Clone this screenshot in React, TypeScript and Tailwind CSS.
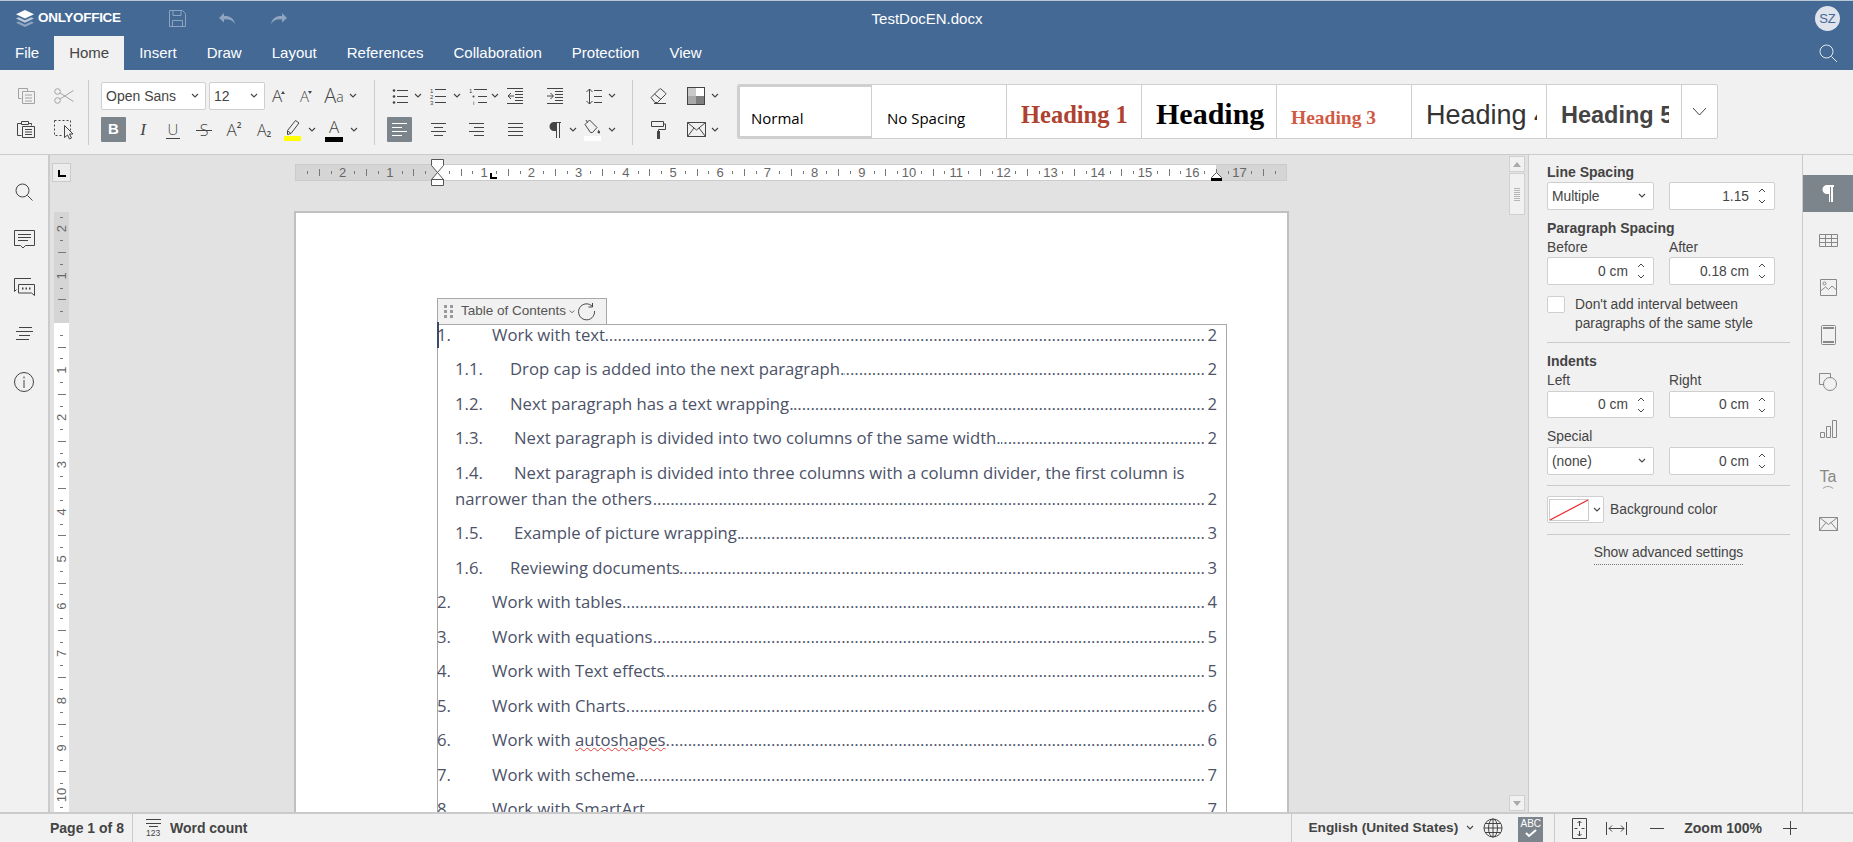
import type { ReactNode } from "react";

const CM = 47.2;

function Ic({ w = 20, h = 20, c = "#444", o = 1, children }: { w?: number; h?: number; c?: string; o?: number; children: ReactNode }) {
  return (
    <svg width={w} height={h} viewBox={`0 0 ${w} ${h}`} fill="none" stroke={c} strokeWidth={1} opacity={o} className="shrink-0">
      {children}
    </svg>
  );
}

function Caret({ c = "#444" }: { c?: string }) {
  return (
    <svg width="8" height="6" viewBox="0 0 8 6" fill="none" stroke={c} strokeWidth={1.1} className="shrink-0">
      <path d="M1 1l3 3 3-3" />
    </svg>
  );
}

function Slot({ className, children }: { className: string; children?: ReactNode }) {
  return <div className={`flex shrink-0 items-center justify-center ${className}`}>{children}</div>;
}

function Combo({ label, className }: { label: string; className: string }) {
  return (
    <div className={`flex h-[28px] items-center justify-between rounded-[2px] border border-[#cfcfcf] bg-white pl-[4px] pr-[6px] text-[14px] text-[#444] ${className}`}>
      <span>{label}</span>
      <Caret />
    </div>
  );
}

function Spin({ value, className }: { value: string; className: string }) {
  return (
    <div className={`flex items-center justify-end rounded-[2px] border border-[#cfcfcf] bg-white pr-[8px] text-[#444] ${className}`}>
      <span className="mr-[9px] pt-px">{value}</span>
      <div className="flex flex-col gap-[6px]">
        <svg width="8" height="5" viewBox="0 0 8 5" fill="none" stroke="#444"><path d="M1 4l3-3 3 3" /></svg>
        <svg width="8" height="5" viewBox="0 0 8 5" fill="none" stroke="#444"><path d="M1 1l3 3 3-3" /></svg>
      </div>
    </div>
  );
}

function HRuler() {
  const origin = 142;
  const ticks: ReactNode[] = [];
  for (let k = -11; k <= 71; k++) {
    const x = origin + (k * CM) / 4;
    if (x < 5 || x > 988 || k === 0) continue;
    if (k % 4 === 0) {
      ticks.push(
        <text key={k} x={x} y={13} textAnchor="middle" fontSize="13" fill="#666" stroke="none" fontFamily="Liberation Sans">
          {Math.abs(k / 4)}
        </text>
      );
    } else {
      const tall = k % 2 === 0;
      ticks.push(<path key={k} d={`M${Math.round(x) + 0.5} ${tall ? 5 : 7}v${tall ? 7 : 3}`} stroke="#777" />);
    }
  }
  return (
    <svg width="992" height="17" viewBox="0 0 992 17" className="block">
      <rect x="0.5" y="0.5" width="991" height="16" fill="#d5d5d5" stroke="#cbcbcb" />
      <rect x="142" y="1" width="779" height="15" fill="#fff" />
      {ticks}
    </svg>
  );
}

function VRuler() {
  const origin = 111;
  const h = 600;
  const ticks: ReactNode[] = [];
  for (let k = -9; k <= 42; k++) {
    const y = origin + (k * CM) / 4;
    if (y < 4 || y > h || k === 0) continue;
    if (k % 4 === 0) {
      ticks.push(
        <text key={k} x={0} y={0} transform={`translate(12 ${y}) rotate(-90)`} textAnchor="middle" fontSize="13" fill="#666" stroke="none" fontFamily="Liberation Sans">
          {Math.abs(k / 4)}
        </text>
      );
    } else {
      const tall = k % 2 === 0;
      ticks.push(<path key={k} d={`M${tall ? 4 : 6} ${Math.round(y) + 0.5}h${tall ? 8 : 3}`} stroke="#777" />);
    }
  }
  return (
    <svg width="15" height={h} viewBox={`0 0 15 ${h}`} className="block">
      <rect x="0" y="0" width="15" height={h} fill="#fff" />
      <rect x="0" y="0" width="15" height={origin} fill="#d5d5d5" />
      {ticks}
    </svg>
  );
}

type TocRow = { num: string; title: ReactNode; page: number; pad?: string; wrap?: ReactNode };

const toc: TocRow[] = [
  { num: "1.", title: "Work with text", page: 2 },
  { num: "1.1.", title: "Drop cap is added into the next paragraph.", page: 2 },
  { num: "1.2.", title: "Next paragraph has a text wrapping.", page: 2 },
  { num: "1.3.", title: "Next paragraph is divided into two columns of the same width.", page: 2, pad: "pl-[4px]" },
  {
    num: "1.4.",
    title: "Next paragraph is divided into three columns with a column divider, the first column is",
    page: 2,
    pad: "pl-[4px]",
    wrap: "narrower than the others",
  },
  { num: "1.5.", title: "Example of picture wrapping.", page: 3, pad: "pl-[4px]" },
  { num: "1.6.", title: "Reviewing documents", page: 3 },
  { num: "2.", title: "Work with tables", page: 4 },
  { num: "3.", title: "Work with equations", page: 5 },
  { num: "4.", title: "Work with Text effects", page: 5 },
  { num: "5.", title: "Work with Charts.", page: 6 },
  {
    num: "6.",
    title: (
      <>
        Work with <span className="underline decoration-[#e23b3b] decoration-wavy decoration-1">autoshapes</span>.
      </>
    ),
    page: 6,
  },
  { num: "7.", title: "Work with scheme", page: 7 },
  { num: "8.", title: "Work with SmartArt", page: 7 },
];

const dots = ".".repeat(260);

function Leader({ page }: { page: number }) {
  return (
    <>
      <span dir="rtl" className="min-w-0 flex-1 overflow-hidden whitespace-nowrap">
        {dots}
      </span>
      <span className="w-[12px] shrink-0 text-right">{page}</span>
    </>
  );
}

function TocLine({ row }: { row: TocRow }) {
  const sub = row.num.length > 2;
  return (
    <div className={`flex flex-col whitespace-nowrap ${sub ? "pl-[17px]" : "-ml-px"}`}>
      <div className="flex h-[34.5px] items-center">
        <span className="w-[55px] shrink-0">{row.num}</span>
        <span className={`shrink-0 ${row.pad ?? ""}`}>{row.title}</span>
        {!row.wrap && <Leader page={row.page} />}
      </div>
      {row.wrap && (
        <div className="-mt-[8.5px] flex h-[34.5px] items-center">
          <span className="shrink-0">{row.wrap}</span>
          <Leader page={row.page} />
        </div>
      )}
    </div>
  );
}

function StyleCell({ className, children }: { className: string; children: ReactNode }) {
  return <div className={`flex h-full shrink-0 items-center overflow-hidden whitespace-nowrap border-r border-[#cfcfcf] bg-white ${className}`}>{children}</div>;
}

export default function App() {
  return (
    <div className="flex h-[842px] w-[1853px] flex-col overflow-hidden bg-[#f1f1f1] text-[#444] [font-family:'Liberation_Sans',Arial,sans-serif]">
      {/* title bar */}
      <header className="relative flex h-[36px] shrink-0 items-center border-t border-[#b9c6d6] bg-[#446995] text-white">
        <svg width="20" height="20" viewBox="0 0 20 20" className="ml-[15px] shrink-0">
          <path d="M10 1l9 4.200-9 4.300-9-4.300z" fill="#fff" />
          <path d="M3.600 8.300l6.400 3 6.400-3 2.600 1.200-9 4.200-9-4.200z" fill="#fff" opacity=".65" />
          <path d="M3.600 12.500l6.400 3 6.400-3 2.600 1.200-9 4.300-9-4.300z" fill="#fff" opacity=".4" />
        </svg>
        <span className="ml-[3px] text-[13.500px] font-bold tracking-[-0.3px]">ONLYOFFICE</span>
        <svg width="17" height="17" viewBox="0 0 17 17" fill="none" stroke="#fff" opacity=".4" className="ml-[48px]">
          <path d="M.5.5h13l3 3v13H.5zM4 .5v5h8v-5M3.500 16.500v-6h10v6" />
        </svg>
        <svg width="18" height="12" viewBox="0 0 18 12" fill="#fff" opacity=".4" className="ml-[33px]">
          <path d="M5 0L0 5l5 4.500V6.500c4-.8 8 .4 11 4.500C15 5 10 2.500 5 3z" />
        </svg>
        <svg width="18" height="12" viewBox="0 0 18 12" fill="#fff" opacity=".4" className="ml-[32px] -scale-x-100">
          <path d="M5 0L0 5l5 4.500V6.500c4-.8 8 .4 11 4.500C15 5 10 2.500 5 3z" />
        </svg>
        <span className="absolute left-[827px] top-[9px] w-[200px] text-center text-[15px] leading-[18px]">TestDocEN.docx</span>
        <span className="ml-auto mr-[13px] flex h-[25px] w-[25px] items-center justify-center rounded-full bg-[#dfe3ec] text-[13px] text-[#446995]">SZ</span>
      </header>

      {/* tabs */}
      <nav className="flex h-[34px] shrink-0 items-stretch bg-[#446995] text-[15px] text-white">
        <span className="flex items-center pl-[15px] pr-[15px]">File</span>
        <span className="flex w-[70px] items-center justify-center bg-[#f1f1f1] text-[#444]">Home</span>
        <span className="ml-[15px] flex items-center">Insert</span>
        <span className="ml-[30px] flex items-center">Draw</span>
        <span className="ml-[30px] flex items-center">Layout</span>
        <span className="ml-[30px] flex items-center">References</span>
        <span className="ml-[30px] flex items-center">Collaboration</span>
        <span className="ml-[30px] flex items-center">Protection</span>
        <span className="ml-[30px] flex items-center">View</span>
        <svg width="19" height="19" viewBox="0 0 19 19" fill="none" stroke="#fff" opacity=".85" className="ml-auto mr-[15px] self-center">
          <circle cx="7.500" cy="7.500" r="6.500" />
          <path d="M12.500 12.500l5.500 5.500" />
        </svg>
      </nav>

      {/* toolbar */}
      <section className="flex h-[85px] shrink-0 border-b border-[#cbcbcb] text-[#444]">
        <div className="flex w-[88px] shrink-0 flex-col pl-[7px] pt-[12px]">
          <div className="flex h-[28px]">
            <Slot className="w-[38px]">
              <Ic w={17} h={16} o={0.45}>
                <path d="M.5 .5h9v3M.5 .5v10h3M4.500 3.500h12v12h-12zM7 7h7M7 10h7M7 13h7" />
              </Ic>
            </Slot>
            <Slot className="w-[38px]">
              <Ic w={20} h={16} o={0.45}>
                <circle cx="3.500" cy="3.500" r="2.800" />
                <circle cx="3.500" cy="12.500" r="2.800" />
                <path d="M6 5L19.500 13.500M6 11L19.500 2.500" />
              </Ic>
            </Slot>
          </div>
          <div className="mt-[7px] flex h-[25px]">
            <Slot className="w-[38px]">
              <Ic w={18} h={17}>
                <path d="M4.500 2.500H.5v12h4M11.500 2.500h3v2M4.500 .5h7v3h-7z" strokeWidth="1" />
                <path d="M5.500 5.500h12v11h-12zM8 8.500h7M8 11h7M8 13.500h7" />
              </Ic>
            </Slot>
            <Slot className="w-[38px]">
              <Ic w={20} h={20}>
                <path d="M.5 .5h16v12M.5 .5v15h9" strokeDasharray="2 2" />
                <path d="M10.500 5.500v12l3-2.500 2 4 2-1-2-4h3.500z" fill="#f1f1f1" stroke="#444" />
              </Ic>
            </Slot>
          </div>
        </div>
        <div className="mt-[10px] h-[65px] w-px shrink-0 bg-[#cbcbcb]" />

        <div className="flex w-[285px] shrink-0 flex-col pl-[12px] pt-[12px]">
          <div className="flex h-[28px] items-center">
            <Combo label="Open Sans" className="w-[105px]" />
            <Combo label="12" className="ml-[3px] w-[56px]" />
            <Slot className="w-[27px] font-['Open_Sans'] font-light">
              <span className="text-[17px]">A</span>
              <span className="-ml-px mb-[8px] h-0 w-0 border-x-[2.500px] border-b-[3px] border-x-transparent border-b-[#444]" />
            </Slot>
            <Slot className="w-[28px] font-['Open_Sans'] font-light">
              <span className="text-[15px]">A</span>
              <span className="-ml-px mb-[8px] h-0 w-0 border-x-[2.500px] border-t-[3px] border-x-transparent border-t-[#444]" />
            </Slot>
            <Slot className="w-[28px] items-baseline font-['Open_Sans'] font-light">
              <span className="text-[20px]">A</span>
              <span className="text-[14px]">a</span>
            </Slot>
            <Slot className="w-[10px]"><Caret /></Slot>
          </div>
          <div className="mt-[7px] flex h-[25px] items-center">
            <Slot className="h-[25px] w-[25px] rounded-[1px] bg-[#7d858c] text-[15px] font-bold text-white">B</Slot>
            <Slot className="w-[34px] font-['Liberation_Serif'] text-[17px] italic">I</Slot>
            <Slot className="w-[26px]">
              <span className="border-b border-[#444] px-[2px] font-['Open_Sans'] text-[15px] font-light leading-[18px]">U</span>
            </Slot>
            <Slot className="relative w-[36px] font-['Open_Sans'] text-[16px] font-light">
              S<span className="absolute left-[10px] top-[12px] h-px w-[16px] bg-[#444]" />
            </Slot>
            <Slot className="w-[24px] font-['Open_Sans'] font-light">
              <span className="text-[17px]">A</span>
              <span className="mb-[9px] text-[8px] font-semibold leading-none">2</span>
            </Slot>
            <Slot className="w-[36px] font-['Open_Sans'] font-light">
              <span className="text-[16px]">A</span>
              <span className="mt-[9px] text-[8px] font-semibold leading-none">2</span>
            </Slot>
            <Slot className="w-[22px]">
              <svg width="18" height="23" viewBox="0 0 18 23" fill="none" stroke="#444">
                <path d="M3.500 12.500l8-10 3.500 2.500-8 10.500-3.500 1zM4 13l3 2.500" />
                <rect x="0" y="18" width="17" height="5" fill="#ffff00" stroke="none" />
              </svg>
            </Slot>
            <Slot className="w-[16px]"><Caret /></Slot>
            <Slot className="relative h-[25px] w-[28px] items-start font-['Open_Sans'] text-[17px] font-light leading-[20px]">
              A<span className="absolute bottom-0 left-[5px] h-[5px] w-[18px] bg-black" />
            </Slot>
            <Slot className="w-[12px]"><Caret /></Slot>
          </div>
        </div>
        <div className="mt-[10px] h-[65px] w-px shrink-0 bg-[#cbcbcb]" />

        <div className="flex w-[257px] shrink-0 flex-col pt-[12px]">
          <div className="flex h-[28px] items-center pl-[11px]">
            <Slot className="w-[28px]">
              <Ic w={16} h={16}>
                <path d="M5 2.500h11M5 8.500h11M5 14.500h11" />
                <circle cx="2" cy="2.500" r="1.300" fill="#444" stroke="none" />
                <circle cx="2" cy="8.500" r="1.300" fill="#444" stroke="none" />
                <circle cx="2" cy="14.500" r="1.300" fill="#444" stroke="none" />
              </Ic>
            </Slot>
            <Slot className="w-[8px]"><Caret /></Slot>
            <Slot className="w-[32px]">
              <Ic w={16} h={18}>
                <path d="M5 2.500h11M5 9.500h11M5 15.500h11" />
                <text x="0" y="6" fontSize="6" fill="#444" stroke="none">1</text>
                <text x="0" y="12" fontSize="6" fill="#444" stroke="none">2</text>
                <text x="0" y="18" fontSize="6" fill="#444" stroke="none">3</text>
              </Ic>
            </Slot>
            <Slot className="w-[6px]"><Caret /></Slot>
            <Slot className="w-[36px]">
              <Ic w={18} h={18}>
                <path d="M5 2.500h13M9 9.500h9M9 15.500h9" />
                <text x="0" y="6" fontSize="6" fill="#444" stroke="none">1</text>
                <circle cx="4.500" cy="9.500" r="1" fill="#444" stroke="none" />
                <text x="4" y="18" fontSize="6" fill="#444" stroke="none">i</text>
              </Ic>
            </Slot>
            <Slot className="-ml-[4px] w-[6px]"><Caret /></Slot>
            <Slot className="w-[34px]">
              <Ic w={16} h={16}>
                <path d="M0 .5h16M8 3.500h8M8 6.500h8M8 9.500h8M8 12.500h8M0 15.500h16M1 8h6M4 5l-3 3 3 3" />
              </Ic>
            </Slot>
            <Slot className="w-[46px]">
              <Ic w={16} h={16}>
                <path d="M0 .5h16M8 3.500h8M8 6.500h8M8 9.500h8M8 12.500h8M0 15.500h16M0 8h6M3.500 5l3 3-3 3" />
              </Ic>
            </Slot>
            <Slot className="w-[32px]">
              <Ic w={16} h={17}>
                <path d="M8 2.500h8M8 8.500h8M8 14.500h8M3.500 1v15M.5 4l3-3 3 3M.5 13l3 3 3-3" />
              </Ic>
            </Slot>
            <Slot className="w-[4px]"><Caret /></Slot>
          </div>
          <div className="mt-[7px] flex h-[25px] items-center pl-[12px]">
            <Slot className="h-[25px] w-[25px] rounded-[1px] bg-[#7d858c]">
              <Ic w={15} h={15} c="#fff">
                <path d="M0 1.500h15M0 5.500h10M0 9.500h15M0 13.500h10" />
              </Ic>
            </Slot>
            <Slot className="w-[52px]">
              <Ic w={15} h={15}>
                <path d="M0 1.500h15M3 5.500h9M0 9.500h15M3 13.500h9" />
              </Ic>
            </Slot>
            <Slot className="w-[24px]">
              <Ic w={15} h={15}>
                <path d="M0 1.500h15M5 5.500h10M0 9.500h15M5 13.500h10" />
              </Ic>
            </Slot>
            <Slot className="w-[54px]">
              <Ic w={15} h={15}>
                <path d="M0 1.500h15M0 5.500h15M0 9.500h15M0 13.500h15" />
              </Ic>
            </Slot>
            <Slot className="w-[26px]">
              <svg width="12" height="16" viewBox="0 0 12 16" fill="#444">
                <path d="M5 0h7v1h-1v15H10V1H8v15H7V9H5A4.500 4.500 0 015 0z" />
              </svg>
            </Slot>
            <Slot className="w-[10px]"><Caret /></Slot>
            <Slot className="w-[28px]">
              <svg width="17" height="22" viewBox="0 0 17 22" fill="none" stroke="#444">
                <path d="M1 5.500L5.500 1l7.500 7.500-4.500 5h-2zM3.500 3.500L2 1" />
                <path d="M14.500 10.500c1 1.500 2 2.500 1.500 3.500s-3 0-2.500-1 1-1.500 1-2.500z" fill="#444" stroke="none" />
                <rect x="0" y="17" width="17" height="5" fill="#fff" stroke="none" />
              </svg>
            </Slot>
            <Slot className="w-[12px]"><Caret /></Slot>
          </div>
        </div>
        <div className="mt-[10px] h-[65px] w-px shrink-0 bg-[#cbcbcb]" />

        <div className="flex w-[104px] shrink-0 flex-col pt-[12px]">
          <div className="flex h-[28px] items-center">
            <Slot className="w-[50px]">
              <Ic w={17} h={16}>
                <path d="M1 9.500L9.500 1c.5-.5 1-.5 1.500 0l4.500 4c.5.500.5 1 0 1.500L7.500 14.500H5zM4.500 6L11 11.500M4 15.500h12" />
              </Ic>
            </Slot>
            <Slot className="w-[26px]">
              <svg width="18" height="18" viewBox="0 0 18 18" stroke="#444">
                <rect x="1" y="1" width="8" height="8" fill="#c9c9c9" stroke="none" />
                <rect x="9" y="1" width="8" height="8" fill="#fff" stroke="none" />
                <rect x="1" y="9" width="8" height="8" fill="#a9a9a9" stroke="none" />
                <rect x="9" y="9" width="8" height="8" fill="#7f7f7f" stroke="none" />
                <rect x=".5" y=".5" width="17" height="17" fill="none" />
              </svg>
            </Slot>
            <Slot className="w-[12px]"><Caret /></Slot>
          </div>
          <div className="mt-[7px] flex h-[25px] items-center">
            <Slot className="w-[50px]">
              <svg width="15" height="18" viewBox="0 0 15 18" fill="none" stroke="#444">
                <path d="M.5 .5h12v5H.5zM12.500 3h2v5.500h-7v2" />
                <rect x="6" y="10" width="3" height="8" fill="#444" stroke="none" />
              </svg>
            </Slot>
            <Slot className="w-[26px]">
              <Ic w={19} h={15}>
                <path d="M.5 .5h18v14H.5zM.5 .5L9.500 8l9-7.500M.5 14.500l6.500-8.500M18.500 14.500L12 6" />
              </Ic>
            </Slot>
            <Slot className="w-[12px]"><Caret /></Slot>
          </div>
        </div>

        <div className="mt-[14px] flex h-[55px] w-[981px] shrink-0 overflow-hidden rounded-[2px] border border-[#cfcfcf] bg-white">
          <StyleCell className="w-[134px] border-2 border-[#848484] pl-[11px] font-['Open_Sans'] text-[15px] text-black">
            <span className="mt-[14px]">Normal</span>
          </StyleCell>
          <StyleCell className="w-[135px] pl-[15px] font-['Open_Sans'] text-[15px] text-black">
            <span className="mt-[14px]">No Spacing</span>
          </StyleCell>
          <StyleCell className="w-[135px] pl-[14px] font-['Liberation_Serif'] text-[24.500px] font-bold text-[#ae412f]">
            <span className="mt-[7px]">Heading 1</span>
          </StyleCell>
          <StyleCell className="w-[135px] pl-[14px] font-['Liberation_Serif'] text-[30px] font-bold text-black">
            <span className="mt-[4px]">Heading</span>
          </StyleCell>
          <StyleCell className="w-[135px] pl-[14px] font-['Liberation_Serif'] text-[19.500px] font-bold text-[#d15a45]">
            <span className="mt-[12px]">Heading 3</span>
          </StyleCell>
          <StyleCell className="w-[135px] pl-[14px] text-[27px] text-[#333]">
            <span className="mt-[7px] block w-[111px] overflow-hidden">Heading 4</span>
          </StyleCell>
          <StyleCell className="w-[135px] pl-[14px] text-[23.500px] font-bold text-[#444]">
            <span className="mt-[9px] block w-[108px] overflow-hidden">Heading 5</span>
          </StyleCell>
          <Slot className="h-full w-[35px]">
            <svg width="15" height="9" viewBox="0 0 15 9" fill="none" stroke="#444"><path d="M1 1l6.500 7L14 1" /></svg>
          </Slot>
        </div>
      </section>

      {/* work area */}
      <main className="flex min-h-0 flex-1">
        <aside className="flex w-[50px] shrink-0 flex-col items-center border-r-2 border-[#cbcbcb] pt-[28px]">
          <svg width="18" height="19" viewBox="0 0 18 19" fill="none" stroke="#444">
            <circle cx="7.500" cy="7.500" r="6.500" />
            <path d="M12.500 12.500l5 5" />
          </svg>
          <svg width="21" height="19" viewBox="0 0 21 19" fill="none" stroke="#444" className="mt-[28px]">
            <path d="M.5 .5h20v15h-9l-2.500 2.500-2.500-2.500h-6zM4 4.500h13M4 7.500h13M4 10.500h10" />
          </svg>
          <svg width="21" height="18" viewBox="0 0 21 18" fill="none" stroke="#444" className="mt-[29px]">
            <path d="M17 .5H.5v13l2-2M4.500 6.500h16v11l-3-2.500h-13z" />
            <path d="M8 10.500h1.500M11.500 10.500H13M15 10.500h1.500" strokeWidth="2" />
          </svg>
          <svg width="17" height="14" viewBox="0 0 17 14" fill="none" stroke="#444" className="mt-[31px]">
            <path d="M3 .5h13M0 4.500h17M3 8.500h11M0 12.500h13" />
          </svg>
          <svg width="20" height="20" viewBox="0 0 20 20" fill="none" stroke="#444" className="mt-[31px]">
            <circle cx="10" cy="10" r="9.500" />
            <path d="M10 8v8M10 4.500v2" />
          </svg>
        </aside>

        <div className="flex w-[1478px] shrink-0">
          <div className="min-w-0 flex-1 overflow-hidden bg-[#e2e2e2]">
            <div className="relative flex h-[56px] items-start pt-[8px]">
              <div className="ml-[2px] flex h-[19px] w-[19px] shrink-0 items-center justify-center border border-[#cbcbcb] bg-[#ececec]">
                <span className="mt-[2px] h-[7px] w-[8px] border-b-2 border-l-2 border-black" />
              </div>
              <div className="ml-[224px] mt-px shrink-0">
                <HRuler />
              </div>
              {/* indent markers */}
              <svg width="13" height="27" viewBox="0 0 13 27" fill="#fff" stroke="#555" className="absolute left-[381px] top-[4px]">
                <path d="M.5 .5h12v6l-6 7-6-7zM.5 20.500l6-7 6 7zM.5 20.500h12v6H.5z" />
              </svg>
              <span className="absolute left-[440px] top-[18px] h-[6px] w-[7px] border-b-2 border-l-2 border-black" />
              <svg width="13" height="9" viewBox="0 0 13 9" className="absolute left-[1160px] top-[17px]">
                <path d="M6.500 .5l5 5v2h-10v-2z" fill="#fff" stroke="#555" />
                <rect x="1" y="6" width="11" height="3" fill="#000" />
              </svg>
            </div>
            <div className="flex">
              <div className="ml-[4px] mt-px w-[15px] shrink-0">
                <VRuler />
              </div>
              <div className="ml-[225px] h-[601px] w-[995px] shrink-0 overflow-hidden border-2 border-b-0 border-[#c0c0c0] bg-white pl-[141px] pr-[60px] pt-[85px]">
                <div className="flex h-[26px] w-[170px] items-center border border-b-0 border-[#a8a8a8] bg-[#f1f1f1] pl-[6px] text-[13.500px] text-[#555]">
                  <svg width="9" height="13" viewBox="0 0 9 13" fill="#999">
                    <rect x="0" y="0" width="3" height="3" />
                    <rect x="6" y="0" width="3" height="3" />
                    <rect x="0" y="5" width="3" height="3" />
                    <rect x="6" y="5" width="3" height="3" />
                    <rect x="0" y="10" width="3" height="3" />
                    <rect x="6" y="10" width="3" height="3" />
                  </svg>
                  <span className="ml-[8px]">Table of Contents</span>
                  <span className="ml-[2px] scale-75"><Caret /></span>
                  <svg width="18" height="18" viewBox="0 0 18 18" fill="none" stroke="#444" className="ml-[2px]">
                    <path d="M14.500 3.500A8 8 0 1016.500 8M14.500 0v4h-4" />
                  </svg>
                </div>
                <div className="relative h-[500px] border border-b-0 border-[#a8a8a8] pr-[9px] font-['Open_Sans'] text-[16.700px] text-[#4c5268]">
                  <span className="absolute -left-[1px] -top-[3px] h-[26px] w-[2px] bg-[#3a4a6b]" />
                  <div className="-mt-[8px]">
                    {toc.map((row) => (
                      <TocLine key={row.num} row={row} />
                    ))}
                  </div>
                </div>
              </div>
            </div>
          </div>
          <div className="flex w-[19px] shrink-0 flex-col bg-[#e2e2e2] pr-[3px] pt-[1px]">
            <div className="flex h-[16px] w-[16px] items-center justify-center border border-[#d0d0d0] bg-[#f1f1f1]">
              <span className="h-0 w-0 border-x-[4px] border-b-[5px] border-x-transparent border-b-[#aaa]" />
            </div>
            <div className="mt-px flex h-[42px] w-[16px] items-center justify-center border border-[#d0d0d0] bg-[#f1f1f1]">
              <span className="h-[13px] w-[6px] bg-[repeating-linear-gradient(#b5b5b5_0_1px,transparent_1px_2px)]" />
            </div>
            <div className="mb-px mt-auto flex h-[16px] w-[16px] items-center justify-center border border-[#d0d0d0] bg-[#f1f1f1]">
              <span className="h-0 w-0 border-x-[4px] border-t-[5px] border-x-transparent border-t-[#aaa]" />
            </div>
          </div>
        </div>

        {/* settings panel */}
        <aside className="flex w-[275px] shrink-0 flex-col border-x border-[#cbcbcb] pl-[18px] pr-[11px] pt-[8px] text-[13.800px] leading-[18px] text-[#444]">
          <div className="text-[14px] font-bold">Line Spacing</div>
          <div className="mt-px flex h-[28px] gap-[15px]">
            <div className="flex w-[107px] items-center justify-between rounded-[2px] border border-[#cfcfcf] bg-white pl-[4px] pr-[7px]">
              <span className="pt-[2px]">Multiple</span>
              <Caret />
            </div>
            <Spin value="1.15" className="w-[106px]" />
          </div>
          <div className="mt-[9px] text-[14px] font-bold">Paragraph Spacing</div>
          <div className="mt-[2px] flex gap-[15px]">
            <span className="w-[107px]">Before</span>
            <span>After</span>
          </div>
          <div className="flex h-[28px] gap-[15px]">
            <Spin value="0 cm" className="w-[107px]" />
            <Spin value="0.18 cm" className="w-[106px]" />
          </div>
          <div className="mt-[10px] flex">
            <span className="mt-px h-[17px] w-[18px] shrink-0 rounded-[2px] border border-[#cfcfcf] bg-white" />
            <span className="ml-[10px] leading-[19px]">
              Don't add interval between
              <br />
              paragraphs of the same style
            </span>
          </div>
          <div className="mt-[9px] h-px w-[243px] bg-[#cbcbcb]" />
          <div className="mt-[9px] text-[14px] font-bold">Indents</div>
          <div className="mt-[2px] flex gap-[15px]">
            <span className="w-[107px]">Left</span>
            <span>Right</span>
          </div>
          <div className="mt-px flex h-[27px] gap-[15px]">
            <Spin value="0 cm" className="w-[107px]" />
            <Spin value="0 cm" className="w-[106px]" />
          </div>
          <div className="mt-[10px]">Special</div>
          <div className="mt-px flex h-[28px] gap-[15px]">
            <div className="flex w-[107px] items-center justify-between rounded-[2px] border border-[#cfcfcf] bg-white pl-[4px] pr-[7px]">
              <span className="pt-px">(none)</span>
              <Caret />
            </div>
            <Spin value="0 cm" className="w-[106px]" />
          </div>
          <div className="mt-[10px] h-px w-[243px] bg-[#cbcbcb]" />
          <div className="mt-[10px] flex items-center">
            <div className="flex h-[27px] w-[57px] items-center rounded-[2px] border border-[#cfcfcf] bg-white pl-[1px]">
              <svg width="40" height="22" viewBox="0 0 40 22" className="shrink-0">
                <rect x=".5" y=".5" width="39" height="21" fill="#fff" stroke="#ccc" />
                <path d="M1 21L39 1" stroke="#f0222c" strokeWidth="1.200" />
              </svg>
              <span className="ml-[4px]"><Caret /></span>
            </div>
            <span className="ml-[6px]">Background color</span>
          </div>
          <div className="mt-[11px] h-px w-[243px] bg-[#cbcbcb]" />
          <div className="mt-[9px] flex w-[243px] justify-center">
            <span className="border-b border-dotted border-[#777] pb-[2px]">Show advanced settings</span>
          </div>
        </aside>

        <aside className="flex w-[50px] shrink-0 flex-col items-center pt-[20px]">
          <div className="flex h-[37px] w-full items-center justify-center bg-[#7d858c]">
            <svg width="12" height="17" viewBox="0 0 12 17" fill="#fff">
              <path d="M5 0h7v2h-1v15H9V2H8v15H7V9H5A4.500 4.500 0 015 0z" />
            </svg>
          </div>
          <svg width="19" height="13" viewBox="0 0 19 13" fill="none" stroke="#888" className="mt-[22px]">
            <path d="M.5 .5h18v12H.5zM.5 4.500h18M.5 8.500h18M6.500 .5v12M12.500 .5v12" />
          </svg>
          <svg width="17" height="17" viewBox="0 0 17 17" fill="none" stroke="#888" className="mt-[32px]">
            <path d="M.5 .5h16v16H.5zM.5 12l5-4 3 2.500L12 7l4.500 4" />
            <circle cx="4.500" cy="4.500" r="1.500" />
          </svg>
          <svg width="15" height="20" viewBox="0 0 15 20" fill="none" stroke="#888" className="mt-[29px]">
            <rect x=".5" y=".5" width="14" height="19" rx="1" />
            <path d="M2 3h11M2 17h11" strokeWidth="2" />
          </svg>
          <svg width="18" height="18" viewBox="0 0 18 18" fill="none" stroke="#888" className="mt-[28px]">
            <path d="M5 11.500H.5V.5h11V5" />
            <circle cx="11" cy="11" r="6.500" />
          </svg>
          <svg width="17" height="18" viewBox="0 0 17 18" fill="none" stroke="#888" className="mt-[29px]">
            <path d="M.5 12.500h4v5h-4zM6.500 6.500h4v11h-4zM12.500 .5h4v17h-4z" />
          </svg>
          <div className="mt-[31px] flex h-[20px] flex-col items-center text-[16px] leading-[16px] text-[#888]">
            Ta
            <svg width="14" height="5" viewBox="0 0 14 5" fill="none" stroke="#888"><path d="M.5 4.500C4 1 10 1 13.500 4.500" /></svg>
          </div>
          <svg width="19" height="14" viewBox="0 0 19 14" fill="none" stroke="#888" className="mt-[28px]">
            <path d="M.5 .5h18v13H.5zM.5 .5l9 7 9-7M.5 13.500l6.500-8M18.500 13.500l-6.500-8" />
          </svg>
        </aside>
      </main>

      {/* status bar */}
      <footer className="flex h-[30px] shrink-0 items-center border-t-2 border-[#cbcbcb] text-[14px] font-bold text-[#444]">
        <span className="ml-[50px]">Page 1 of 8</span>
        <span className="ml-[8px] h-full w-px bg-[#cbcbcb]" />
        <svg width="16" height="18" viewBox="0 0 16 18" fill="none" stroke="#444" className="ml-[13px]">
          <path d="M0 .5h15M0 4.500h15M3 7.500h9" />
          <text x="0" y="17" fontSize="8.500" fill="#444" stroke="none" fontWeight="400">123</text>
        </svg>
        <span className="ml-[8px]">Word count</span>
        <span className="ml-[1044px] h-full w-px bg-[#cbcbcb]" />
        <span className="ml-[16px] text-[13.700px]">English (United States)</span>
        <span className="ml-[8px]"><Caret /></span>
        <svg width="20" height="20" viewBox="0 0 20 20" fill="none" stroke="#444" className="ml-[9px]">
          <circle cx="10" cy="10" r="9" />
          <ellipse cx="10" cy="10" rx="4.500" ry="9" />
          <path d="M10 1v18M1 10h18M2 5.500h16M2 14.500h16" />
        </svg>
        <span className="ml-[15px] flex h-[25px] w-[25px] flex-col items-center self-end bg-[#7d858c] pt-[2px] text-[10px] font-normal leading-[10px] text-white">
          ABC
          <svg width="14" height="9" viewBox="0 0 14 9" fill="none" stroke="#fff" strokeWidth="2"><path d="M2 4l3 3 7-6" /></svg>
        </span>
        <span className="ml-[11px] h-full w-px bg-[#cbcbcb]" />
        <svg width="15" height="21" viewBox="0 0 15 21" fill="none" stroke="#444" className="ml-[17px]">
          <path d="M.5 .5h14v20H.5zM7.500 3v5M5.500 5l2-2 2 2M7.500 13v5M5.500 16l2 2 2-2M2.500 10.500h3M12.500 10.500h-3" />
        </svg>
        <svg width="21" height="13" viewBox="0 0 21 13" fill="none" stroke="#444" className="ml-[19px]">
          <path d="M.5 0v13M20.500 0v13M3 6.500h15M6 3.500l-3 3 3 3M15 3.500l3 3-3 3" />
        </svg>
        <span className="ml-[23px] h-px w-[14px] bg-[#444]" />
        <span className="ml-[20px]">Zoom 100%</span>
        <svg width="14" height="14" viewBox="0 0 14 14" fill="none" stroke="#444" className="ml-[21px]">
          <path d="M0 7.500h14M7.500 0v14" />
        </svg>
      </footer>
    </div>
  );
}
